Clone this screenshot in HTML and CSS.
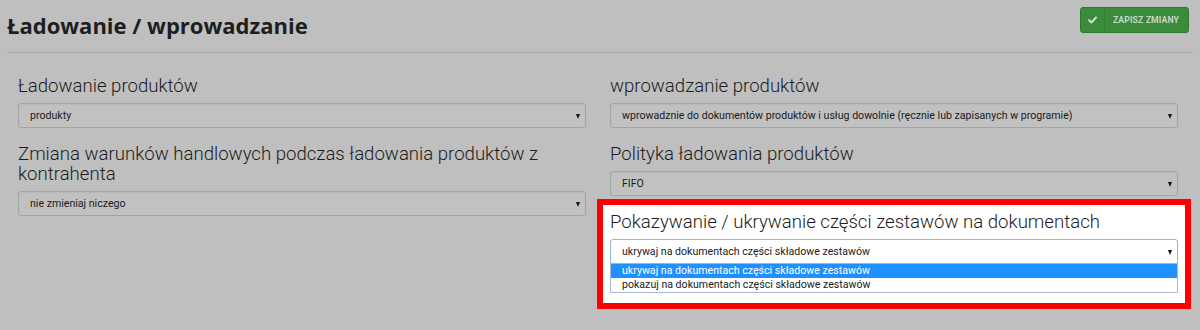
FILE: index.html
```html
<!DOCTYPE html>
<html lang="pl">
<head>
<meta charset="utf-8">
<title>Ładowanie / wprowadzanie</title>
<link rel="stylesheet" href="styles.css">
</head>
<body>
<div class="page">
  <header class="topbar">
    <h1 class="title">Ładowanie / wprowadzanie</h1>
    <button class="save-btn" type="button">
      <span class="save-icon">
        <svg width="9" height="8" viewBox="0 0 9 8"><path d="M1 4.2 L3.4 6.5 L8 1.5" fill="none" stroke="currentColor" stroke-width="1.9" stroke-linecap="round" stroke-linejoin="round"/></svg>
      </span>
      <span class="save-text">ZAPISZ ZMIANY</span>
    </button>
  </header>

  <div class="form-grid">
    <div class="col">
      <div class="field">
        <div class="field-label">Ładowanie produktów</div>
        <div class="select"><span class="select-value">produkty</span><span class="caret"></span></div>
      </div>
      <div class="field">
        <div class="field-label">Zmiana warunków handlowych podczas ładowania produktów z kontrahenta</div>
        <div class="select"><span class="select-value">nie zmieniaj niczego</span><span class="caret"></span></div>
      </div>
    </div>

    <div class="col">
      <div class="field">
        <div class="field-label">wprowadzanie produktów</div>
        <div class="select"><span class="select-value">wprowadznie do dokumentów produktów i usług dowolnie (ręcznie lub zapisanych w programie)</span><span class="caret"></span></div>
      </div>
      <div class="field">
        <div class="field-label">Polityka ładowania produktów</div>
        <div class="select"><span class="select-value">FIFO</span><span class="caret"></span></div>
      </div>
      <div class="field field-highlight">
        <div class="field-label">Pokazywanie / ukrywanie części zestawów na dokumentach</div>
        <div class="select select-open"><span class="select-value">ukrywaj na dokumentach części składowe zestawów</span><span class="caret"></span></div>
        <ul class="dropdown">
          <li class="option option-active">ukrywaj na dokumentach części składowe zestawów</li>
          <li class="option">pokazuj na dokumentach części składowe zestawów</li>
        </ul>
      </div>
    </div>
  </div>
</div>
</body>
</html>
```

FILE: styles.css
```css
html, body {
  margin: 0;
  padding: 0;
}

body {
  background: #bfbfbf;
  font-family: Roboto, "Liberation Sans", Arial, sans-serif;
  color: #222;
  width: 1200px;
  height: 330px;
  overflow: hidden;
}

.page {
  padding: 0 7px;
}

.topbar {
  box-sizing: border-box;
  height: 53px;
  border-bottom: 1px solid #aaaaaa;
  display: flex;
  justify-content: space-between;
  align-items: flex-start;
  padding: 7px 4px 0 0;
}

.title {
  margin: 5px 0 0 0;
  font-family: "Open Sans", "Liberation Sans", sans-serif;
  font-weight: 700;
  font-size: 22px;
  line-height: 26px;
  color: #1e1e1e;
}

.save-btn {
  display: flex;
  align-items: stretch;
  height: 26px;
  padding: 0;
  border: 1px solid #2f772f;
  border-radius: 3px;
  background: #3a8b3a;
  color: #c6d6c6;
  font-family: Roboto, "Liberation Sans", sans-serif;
  cursor: pointer;
}

.save-icon {
  width: 23px;
  display: flex;
  align-items: center;
  justify-content: center;
  border-right: 1px solid #327d32;
  color: #d2e0d2;
}

.save-text {
  display: flex;
  align-items: center;
  padding: 0 9px 0 8px;
  font-size: 8.7px;
  font-weight: 700;
  letter-spacing: 0.1px;
}

.form-grid {
  display: grid;
  grid-template-columns: 1fr 1fr;
  column-gap: 24px;
  padding: 23px 15px 0 11px;
}

.field {
  margin-bottom: 16px;
}

.field-label {
  font-family: Roboto, "Liberation Sans", sans-serif;
  font-weight: 300;
  font-size: 18.6px;
  line-height: 20px;
  color: #1c1c1c;
  margin-bottom: 7px;
}

.select {
  box-sizing: border-box;
  height: 25px;
  display: flex;
  align-items: center;
  justify-content: space-between;
  padding: 0 5px 0 11px;
  border: 1px solid #a4a4a4;
  border-radius: 3px;
  background: #c1c1c1;
  box-shadow: inset 0 1px 1px rgba(0, 0, 0, 0.04);
  font-size: 10.6px;
  color: #1a1a1a;
}

.select-value {
  white-space: nowrap;
}

.caret {
  width: 0;
  height: 0;
  border-left: 2.5px solid transparent;
  border-right: 2.5px solid transparent;
  border-top: 5px solid #111;
  margin-top: 1px;
}

.field-highlight {
  margin: -13px -13px 0 -13px;
  padding: 7px 7px 10px 7px;
  border: 6px solid #ff0000;
  background: #ffffff;
}

.select-open {
  background: #ffffff;
  border-color: #98b4dc;
  border-radius: 3px 3px 0 0;
  box-shadow: none;
}

.dropdown {
  list-style: none;
  margin: 0;
  padding: 0;
  border: 1px solid #a6b9d6;
  border-top: none;
  background: #fff;
}

.option {
  height: 14px;
  line-height: 14px;
  padding-left: 11px;
  font-size: 10.6px;
  color: #1a1a1a;
  white-space: nowrap;
}

.option-active {
  background: #1e90ff;
  color: #ffffff;
}
```
